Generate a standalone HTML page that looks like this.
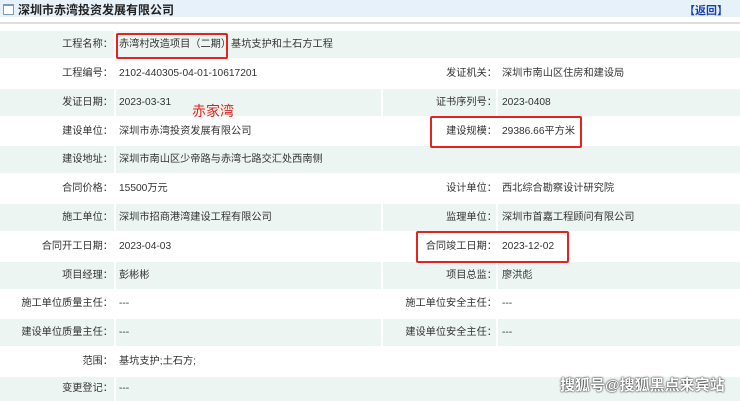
<!DOCTYPE html>
<html><head><meta charset="utf-8"><style>
body{margin:0;width:740px;height:401px;overflow:hidden;background:#fff;font-family:"Liberation Sans","Noto Sans CJK SC",sans-serif;font-size:10.2px;color:#333;position:relative}
.hd{position:absolute;left:0;top:0;width:740px;height:17px;background:#e6f1f9}
.hd .t{position:absolute;left:18px;top:1px;font-weight:bold;font-size:12px;color:#222}
.hd .ic{position:absolute;left:3px;top:4px;width:9px;height:8px;border:1px solid #7a9cc0;background:#fff;border-top:2px solid #7a9cc0}
.hd .b{position:absolute;right:12px;top:2px;color:#1a3fb0;font-weight:bold;font-size:11px}
.ln{position:absolute;left:0;top:22px;width:740px;height:2px;background:#ddd}
.r{position:absolute;left:0;width:740px;height:27px}
.g .c{background:#edf5f2}
.c{position:absolute;top:0;height:27px;line-height:27px;white-space:nowrap}
.l{left:0;width:114px}
.l span,.l2 span{position:absolute;right:1px}
.v{left:114px;width:267px;padding-left:5px;box-sizing:border-box}
.g .v,.g .vf{left:116px;width:265px;padding-left:3px}
.vf{left:114px;width:626px;padding-left:5px;box-sizing:border-box}
.g .vf{width:624px}
.l2{left:383px;width:113px}
.l2 span{right:-1px}
.v2{left:498px;width:242px;padding-left:4px;box-sizing:border-box}
.box{position:absolute;border:2px solid #e3231f;border-radius:2px}
</style></head><body>
<div class="hd"><div class="ic"></div><div class="t">深圳市赤湾投资发展有限公司</div><div class="b">【返回】</div></div>
<div class="ln"></div>

<div class="r g" style="top:31px"><div class="c l"><span>工程名称：</span></div><div class="c vf">赤湾村改造项目（二期）基坑支护和土石方工程</div></div>
<div class="r" style="top:60px"><div class="c l"><span>工程编号：</span></div><div class="c v">2102-440305-04-01-10617201</div><div class="c l2"><span>发证机关：</span></div><div class="c v2">深圳市南山区住房和建设局</div></div>
<div class="r g" style="top:89px"><div class="c l"><span>发证日期：</span></div><div class="c v">2023-03-31</div><div class="c l2"><span>证书序列号：</span></div><div class="c v2">2023-0408</div></div>
<div class="r" style="top:118px"><div class="c l"><span>建设单位：</span></div><div class="c v">深圳市赤湾投资发展有限公司</div><div class="c l2"><span>建设规模：</span></div><div class="c v2">29386.66平方米</div></div>
<div class="r g" style="top:146px"><div class="c l"><span>建设地址：</span></div><div class="c vf">深圳市南山区少帝路与赤湾七路交汇处西南侧</div></div>
<div class="r" style="top:175px"><div class="c l"><span>合同价格：</span></div><div class="c v">15500万元</div><div class="c l2"><span>设计单位：</span></div><div class="c v2">西北综合勘察设计研究院</div></div>
<div class="r g" style="top:204px"><div class="c l"><span>施工单位：</span></div><div class="c v">深圳市招商港湾建设工程有限公司</div><div class="c l2"><span>监理单位：</span></div><div class="c v2">深圳市首嘉工程顾问有限公司</div></div>
<div class="r" style="top:233px"><div class="c l"><span>合同开工日期：</span></div><div class="c v">2023-04-03</div><div class="c l2"><span>合同竣工日期：</span></div><div class="c v2">2023-12-02</div></div>
<div class="r g" style="top:262px"><div class="c l"><span>项目经理：</span></div><div class="c v">彭彬彬</div><div class="c l2"><span>项目总监：</span></div><div class="c v2">廖洪彪</div></div>
<div class="r" style="top:290px"><div class="c l"><span>施工单位质量主任：</span></div><div class="c v">---</div><div class="c l2"><span>施工单位安全主任：</span></div><div class="c v2">---</div></div>
<div class="r g" style="top:319px"><div class="c l"><span>建设单位质量主任：</span></div><div class="c v">---</div><div class="c l2"><span>建设单位安全主任：</span></div><div class="c v2">---</div></div>
<div class="r" style="top:348px"><div class="c l"><span>范围：</span></div><div class="c vf">基坑支护;土石方;</div></div>
<div class="r g" style="top:377px;height:24px"><div class="c l" style="height:24px;line-height:24px"><span>变更登记：</span></div><div class="c vf" style="height:24px;line-height:24px">---</div></div>

<div class="box" style="left:116px;top:33px;width:108px;height:22px"></div>
<div class="box" style="left:430px;top:116px;width:148px;height:28px"></div>
<div class="box" style="left:416px;top:231px;width:149px;height:28px"></div>
<div style="position:absolute;left:192px;top:101px;color:#e3231f;font-size:14px">赤家湾</div>
<div style="position:absolute;left:560px;top:374px;color:#fff;font-size:15px;font-weight:bold;text-shadow:0 0 2px #333,0 0 1px #000">搜狐号@搜狐黑点来宾站</div>
</body></html>
